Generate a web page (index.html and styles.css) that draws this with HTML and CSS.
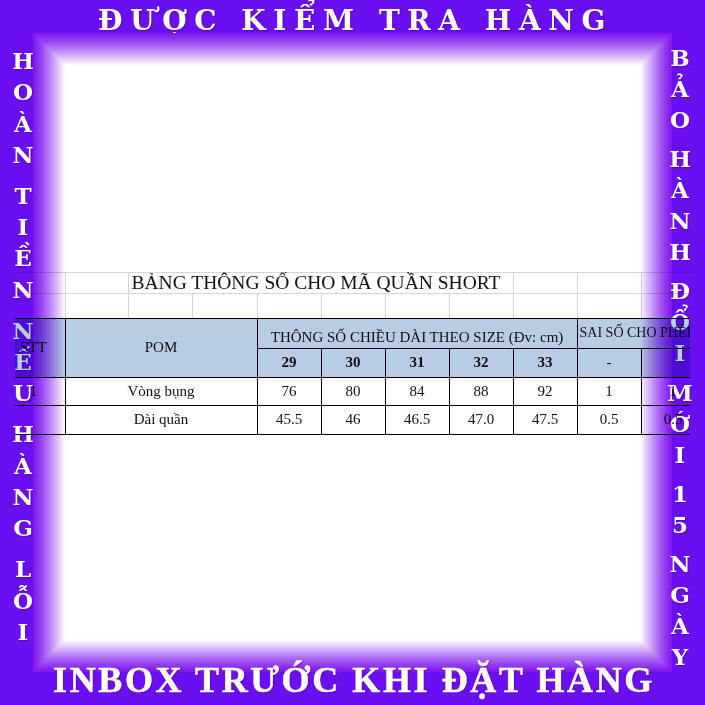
FILE: index.html
```html
<!DOCTYPE html>
<html lang="vi">
<head>
<meta charset="utf-8">
<title>Bảng thông số quần short</title>
<link rel="stylesheet" href="styles.css">
</head>
<body>
<div class="frame">
  <div class="top">ĐƯỢC KIỂM TRA HÀNG</div>
  <div class="glow"></div>
  <div class="side side-left">
    <span>H</span><span>O</span><span>À</span><span>N</span><i class="gap"></i>
    <span>T</span><span>I</span><span>Ề</span><span>N</span><i class="gap"></i>
    <span>N</span><span>Ế</span><span>U</span><i class="gap"></i>
    <span>H</span><span>À</span><span>N</span><span>G</span><i class="gap"></i>
    <span>L</span><span>Ỗ</span><span>I</span>
  </div>
  <div class="side side-right">
    <span>B</span><span>Ả</span><span>O</span><i class="gap"></i>
    <span>H</span><span>À</span><span>N</span><span>H</span><i class="gap"></i>
    <span>Đ</span><span>Ổ</span><span>I</span><i class="gap"></i>
    <span>M</span><span>Ớ</span><span>I</span><i class="gap"></i>
    <span>1</span><span>5</span><i class="gap"></i>
    <span>N</span><span>G</span><span>À</span><span>Y</span>
  </div>
  <div class="bottom">INBOX TRƯỚC KHI ĐẶT HÀNG</div>
  <div class="sheet">
    <table>
      <colgroup>
        <col class="c-stt"><col class="c-a"><col class="c-b"><col class="c-c">
        <col class="c-n"><col class="c-n"><col class="c-n"><col class="c-n"><col class="c-n">
        <col class="c-n"><col class="c-n">
      </colgroup>
      <tr class="r1">
        <td class="stt"></td><td></td>
        <td class="title" colspan="6">BẢNG THÔNG SỐ CHO MÃ QUẦN SHORT</td>
        <td></td><td></td><td></td>
      </tr>
      <tr class="r2">
        <td class="stt"></td><td></td><td></td><td></td><td></td><td></td><td></td><td></td><td></td><td></td><td></td>
      </tr>
      <tr class="r3 head">
        <td class="stt" rowspan="2">STT</td>
        <td class="pom" colspan="3" rowspan="2">POM</td>
        <td class="spec" colspan="5">THÔNG SỐ CHIỀU DÀI THEO SIZE (Đv: cm)</td>
        <td class="tol" colspan="2">SAI SỐ CHO PHÉP</td>
      </tr>
      <tr class="r4 head">
        <td class="b">29</td><td class="b">30</td><td class="b">31</td><td class="b">32</td><td class="b">33</td>
        <td>-</td><td></td>
      </tr>
      <tr class="r5 data">
        <td class="stt">1</td><td colspan="3">Vòng bụng</td>
        <td>76</td><td>80</td><td>84</td><td>88</td><td>92</td><td>1</td><td>1</td>
      </tr>
      <tr class="r6 data">
        <td class="stt"></td><td colspan="3">Dài quần</td>
        <td>45.5</td><td>46</td><td>46.5</td><td>47.0</td><td>47.5</td><td>0.5</td><td>0.5</td>
      </tr>
    </table>
  </div>
</div>
</body>
</html>
```

FILE: styles.css
```css
* { box-sizing: border-box; }
html, body { margin: 0; padding: 0; }
body {
  width: 705px;
  height: 705px;
  overflow: hidden;
  background: #6a0ff2;
}
.frame {
  display: grid;
  grid-template-columns: 33px 639px 33px;
  grid-template-rows: 33px 639px 33px;
  width: 705px;
  height: 705px;
  background: #6a0ff2;
  font-family: "DejaVu Serif", serif;
  color: #fff;
}
.top {
  grid-area: 1 / 1 / 2 / 4;
  text-align: center;
  font-weight: bold;
  font-size: 28px;
  line-height: 33px;
  letter-spacing: 7.6px;
  padding-top: 4px;
  padding-left: 6px;
  white-space: nowrap;
  text-shadow: 1px 1px 1px rgba(60, 0, 110, 0.55);
}
.glow {
  grid-area: 2 / 2 / 3 / 3;
  background: #fff;
  box-shadow:
    inset 0 0 0 2px #821aee,
    inset 0 0 0 4px #8724ef,
    inset 0 0 0 6px #8e2ff0,
    inset 0 0 0 8px #943cf1,
    inset 0 0 0 10px #9c49f2,
    inset 0 0 0 12px #a357f3,
    inset 0 0 0 14px #ab65f4,
    inset 0 0 0 16px #b374f5,
    inset 0 0 0 18px #bb83f6,
    inset 0 0 0 20px #c493f7,
    inset 0 0 0 22px #cda2f8,
    inset 0 0 0 24px #d5b3f9,
    inset 0 0 0 26px #dec3fb,
    inset 0 0 0 28px #e8d4fc,
    inset 0 0 0 30px #f1e5fd,
    inset 0 0 0 32px #faf6fe;
}
.side {
  grid-area: 2 / 1 / 3 / 2;
  justify-self: start;
  width: 46px;
  display: flex;
  flex-direction: column;
  align-items: center;
  padding-top: 12px;
  font-weight: bold;
  font-size: 23px;
  text-shadow: 1px 1px 1px rgba(60, 0, 110, 0.5);
}
.side span {
  display: block;
  height: 31.3px;
  line-height: 31.3px;
}
.side .gap {
  display: block;
  height: 9.7px;
}
.side-right {
  grid-area: 2 / 3 / 3 / 4;
  justify-self: end;
  width: 50px;
  padding-top: 9px;
}
.side-right span {
  height: 31px;
  line-height: 31px;
}
.side-right .gap { height: 9.2px; }
.bottom {
  grid-area: 3 / 1 / 4 / 4;
  text-align: center;
  font-family: "Liberation Serif", serif;
  font-weight: bold;
  font-size: 36px;
  line-height: 33px;
  letter-spacing: 2.6px;
  padding-left: 3px;
  margin-top: -8px;
  white-space: nowrap;
  -webkit-text-stroke: 0.5px #fff;
  text-shadow: 1px 1px 1px rgba(60, 0, 110, 0.55);
}
.sheet {
  grid-area: 1 / 1 / 4 / 4;
  align-self: start;
  margin: 272px 0 0 15px;
  width: 675px;
  overflow: hidden;
  mix-blend-mode: multiply;
  background: #fff;
  font-family: "Liberation Serif", serif;
  color: #111;
}
.sheet table {
  border-collapse: collapse;
  table-layout: fixed;
  width: 690px;
}
.c-stt { width: 50px; }
.c-a { width: 63px; }
.c-b { width: 64px; }
.c-c { width: 65px; }
.c-n { width: 64px; }
.sheet td {
  padding: 0;
  font-size: 15px;
  line-height: 1;
  text-align: center;
  vertical-align: middle;
  border: 1px solid #d6d6d6;
  white-space: nowrap;
  overflow: visible;
}
.sheet td.stt {
  border-left: none;
  padding-right: 13px;
}
.r1 td { height: 19px; }
.r2 td { height: 25px; border-bottom-color: #000; }
.r3 td { height: 30px; }
.r4 td { height: 29px; }
.r5 td { height: 28px; }
.r6 td { height: 29px; }
.head td, .data td { border-color: #000; }
.head td { background: #b8cce4; }
.sheet td.title {
  text-align: left;
  padding-left: 3px;
  font-size: 19.5px;
}
.sheet td.spec { padding-top: 9px; }
.sheet td.tol {
  text-align: left;
  padding-left: 2px;
  font-size: 14px;
}
.sheet td.b { font-weight: bold; }
```
